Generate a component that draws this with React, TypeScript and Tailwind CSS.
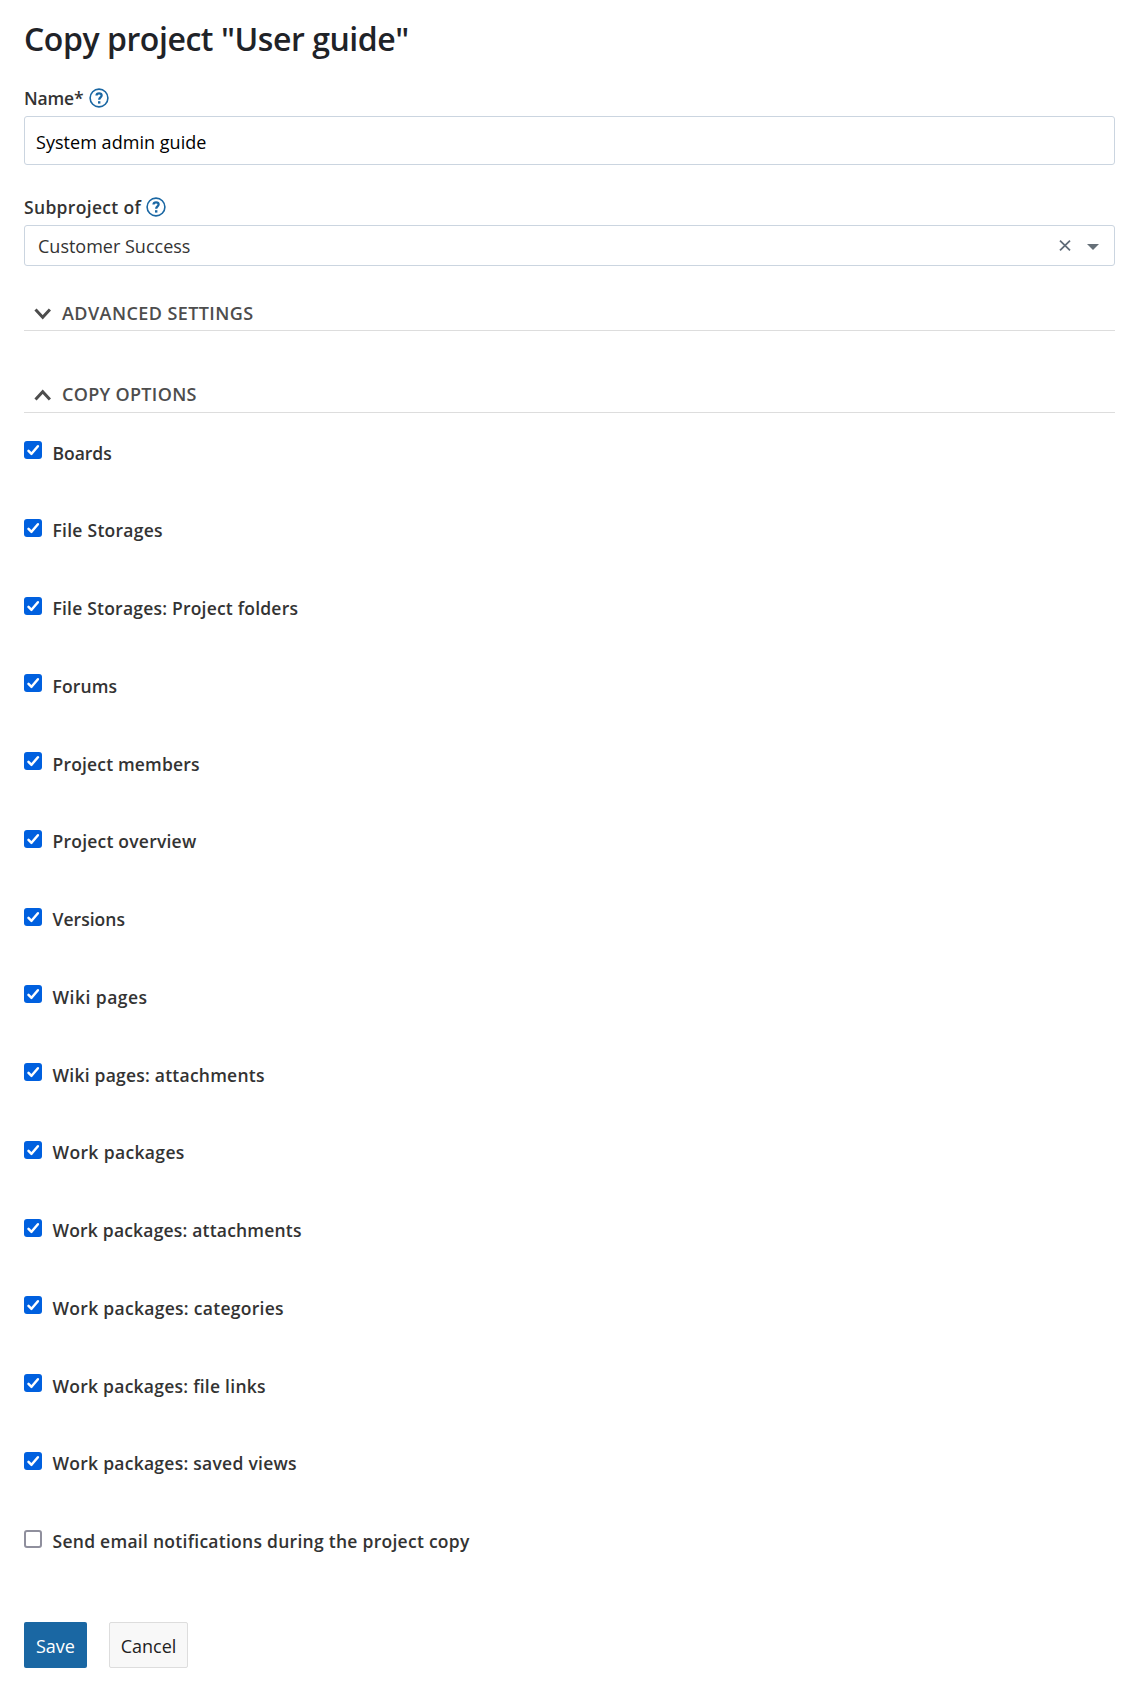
import { useState } from 'react';

type Option = { label: string; tracking: string; checked?: boolean };

const OPTIONS: Option[] = [
  { label: 'Boards', tracking: 'tracking-[-0.02px]', checked: true },
  { label: 'File Storages', tracking: 'tracking-[0.26px]', checked: true },
  { label: 'File Storages: Project folders', tracking: 'tracking-[0.21px]', checked: true },
  { label: 'Forums', tracking: 'tracking-[0.13px]', checked: true },
  { label: 'Project members', tracking: 'tracking-[0.17px]', checked: true },
  { label: 'Project overview', tracking: 'tracking-[0.22px]', checked: true },
  { label: 'Versions', tracking: 'tracking-[0.03px]', checked: true },
  { label: 'Wiki pages', tracking: 'tracking-[0.48px]', checked: true },
  { label: 'Wiki pages: attachments', tracking: 'tracking-[0.23px]', checked: true },
  { label: 'Work packages', tracking: 'tracking-[0.36px]', checked: true },
  { label: 'Work packages: attachments', tracking: 'tracking-[0.19px]', checked: true },
  { label: 'Work packages: categories', tracking: 'tracking-[0.29px]', checked: true },
  { label: 'Work packages: file links', tracking: 'tracking-[0.25px]', checked: true },
  { label: 'Work packages: saved views', tracking: 'tracking-[0.26px]', checked: true },
  { label: 'Send email notifications during the project copy', tracking: 'tracking-[0.27px]' },
];

function HelpIcon() {
  return (
    <svg className="size-5 shrink-0" viewBox="0 0 20 20" fill="none" stroke="#1a67a3" aria-hidden="true">
      <circle cx="10" cy="10" r="8.9" strokeWidth="1.6" />
      <path d="M7.500 7.500c.1-1.400 1.200-2.100 2.600-2.100 1.500 0 2.500.8 2.500 2.100 0 1.800-2.400 1.900-2.400 4.200" strokeWidth="2.300" />
      <path d="M9 13.200h2.400v2.400H9z" fill="#1a67a3" stroke="none" />
    </svg>
  );
}

function Chevron({ up = false }: { up?: boolean }) {
  return (
    <svg className="h-3 w-[17px] shrink-0" viewBox="0 0 17 12" fill="none" stroke="#4d4d4d" strokeWidth="3" aria-hidden="true">
      <path d={up ? 'M1.500 10.500 8.700 2.800 15.900 10.500' : 'M1.500 1.500 8.700 9.200 15.900 1.500'} />
    </svg>
  );
}

function CheckRow({ label, tracking, checked: initial = false }: Option) {
  const [checked, setChecked] = useState(initial);
  return (
    <label className="flex h-[77.75px] items-start">
      <input type="checkbox" className="sr-only" checked={checked} onChange={() => setChecked(!checked)} />
      {checked ? (
        <span className="flex size-[18px] shrink-0 items-center justify-center rounded-[3px] bg-[#0060df]">
          <svg className="size-[18px]" viewBox="0 0 18 18" fill="none" stroke="#fff" strokeWidth="2.500" strokeLinecap="round" strokeLinejoin="round" aria-hidden="true">
            <path d="M4.500 9.800 7.500 12.800 13.900 5.200" />
          </svg>
        </span>
      ) : (
        <span className="size-[18px] shrink-0 rounded-[3px] border-2 border-[#8f8f9d] bg-white" />
      )}
      <span className={`mt-[-0.3px] ml-[10.5px] whitespace-nowrap text-[17.5px] leading-6 font-semibold text-[#333333] ${tracking}`}>{label}</span>
    </label>
  );
}

export default function App() {
  return (
    <main className="min-h-[1696px] bg-white pt-[15px] pr-8 pl-6 font-['Open_Sans',sans-serif]">
      <h1 className="h-12 text-[32px] leading-[48px] font-semibold tracking-[-0.44px] whitespace-nowrap text-[#1f2328]">
        Copy project "User guide"
      </h1>

      <div className="mt-[23px] flex h-6 items-center gap-[6px] text-[17.5px] leading-6 font-semibold text-[#333333]">
        <span className="tracking-[-0.16px]">Name*</span>
        <HelpIcon />
      </div>
      <div className="mt-[6px] flex h-[49px] items-center rounded-[3px] border border-[#cbd5e0] pt-[3px] pl-[11px] text-lg leading-6 tracking-[0.04px] text-black">
        System admin guide
      </div>

      <div className="mt-[30px] flex h-6 items-center gap-[5px] text-[17.5px] leading-6 font-semibold text-[#333333]">
        <span className="tracking-[0.32px]">Subproject of</span>
        <HelpIcon />
      </div>
      <div className="mt-[6px] flex h-[41px] items-center rounded-[3px] border border-[#cbd5e0] pr-[15px] pl-[13px] text-lg leading-6 text-[#333333]">
        <span className="flex-1 pt-px">Customer Success</span>
        <svg className="mr-4 h-[11px] w-3" viewBox="0 0 12 11" fill="none" stroke="#5f6b78" strokeWidth="1.800" aria-hidden="true">
          <path d="M1 .7 11 10.300M11 .7 1 10.300" />
        </svg>
        <svg className="mt-[3px] h-[6px] w-3" viewBox="0 0 12 6" fill="#667078" aria-hidden="true">
          <path d="M0 0h12L6 6z" />
        </svg>
      </div>

      <h2 className="mt-[35px] flex h-[30px] items-start border-b border-[#dddddd] pl-[10px] text-lg leading-6 font-semibold text-[#4d4d4d]">
        <span className="flex h-6 items-center pt-[2px]"><Chevron /></span>
        <span className="ml-[11px] tracking-[0.42px]">ADVANCED SETTINGS</span>
      </h2>
      <h2 className="mt-[51px] flex h-[31px] items-start border-b border-[#dddddd] pl-[10px] text-lg leading-6 font-semibold text-[#4d4d4d]">
        <span className="flex h-6 items-center pt-[2px]"><Chevron up /></span>
        <span className="ml-[11px] tracking-[0.31px]">COPY OPTIONS</span>
      </h2>

      <div className="mt-7 h-[1181px]">
        {OPTIONS.map((o) => (
          <CheckRow key={o.label} {...o} />
        ))}
      </div>

      <div className="flex gap-[22px] text-lg leading-6">
        <button className="h-[46px] w-[63px] rounded-[2px] bg-[#1a67a3] pt-[2px] text-white">Save</button>
        <button className="h-[46px] w-[79px] rounded-[2px] border border-[#dddddd] bg-[#f8f8f8] pt-[2px] text-[#222222]">Cancel</button>
      </div>
    </main>
  );
}
